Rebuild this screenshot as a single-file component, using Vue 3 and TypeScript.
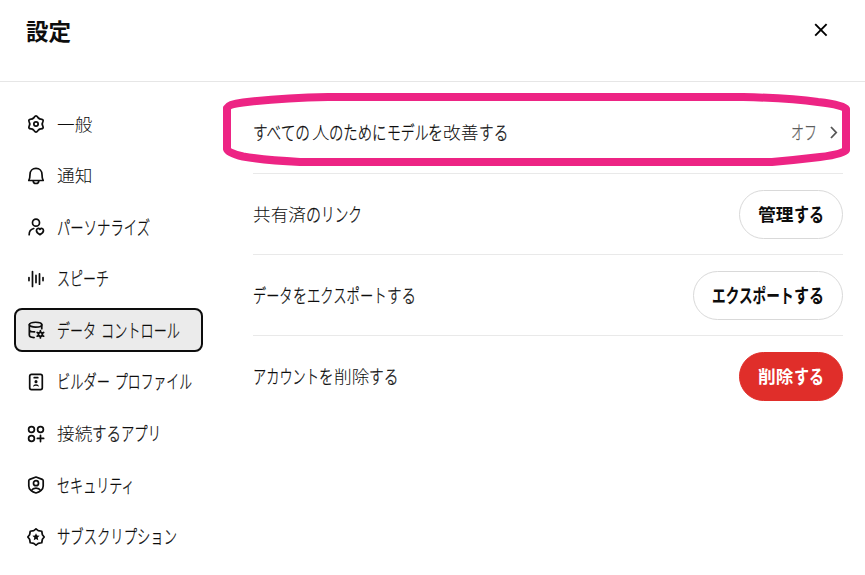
<script setup lang="ts">
import { h, type FunctionalComponent } from 'vue'

// A run is a piece of text and the width it occupies, in pixels.
type Run = [text: string, width: number]

interface NavItem {
  icon: string
  label: Run[]
  active?: boolean
}

interface Row {
  label: Run[]
  value?: Run[]
  action?: Run[]
  danger?: boolean
}

// Full-width glyphs are one em wide, so each run is condensed to its own width.
const Label: FunctionalComponent<{ runs: Run[]; size?: number }> = (props) => {
  const size = props.size ?? 17.6
  return h(
    'span',
    { class: 'label' },
    props.runs.map(([text, width]) => {
      const kana = /[\u3040-\u30ff]/.test(text)
      const scaleX = width / (text.length * size)
      return h('span', { class: ['run', { kana }], style: { width: `${width}px` } }, [
        h('span', { class: 'glyphs', style: { transform: `scale(${scaleX}, ${kana ? 1.08 : 1})` } }, text),
      ])
    }),
  )
}
Label.props = ['runs', 'size']

const nav: NavItem[] = [
  { icon: 'gear', label: [['一般', 35.4]] },
  { icon: 'bell', label: [['通知', 35.4]] },
  { icon: 'person', label: [['パーソナライズ', 93.5]] },
  { icon: 'wave', label: [['スピーチ', 52]] },
  { icon: 'data', label: [['データ', 39], ['\u00a0', 5], ['コントロール', 79]], active: true },
  { icon: 'badge', label: [['ビルダー', 53], ['\u00a0', 4.5], ['プロファイル', 77]] },
  { icon: 'apps', label: [['接続', 35.4], ['する', 29], ['アプリ', 40]] },
  { icon: 'shield', label: [['セキュリティ', 78.5]] },
  { icon: 'star', label: [['サブスクリプション', 120]] },
]

const rows: Row[] = [
  {
    label: [['すべての', 58.5], ['人', 17.5], ['のために', 57.5], ['モデル', 41.5], ['を', 15], ['改善', 35.6], ['する', 29.3]],
    value: [['オフ', 26]],
  },
  { label: [['共有済', 53], ['の', 15], ['リンク', 41]], action: [['管理', 35.4], ['する', 30]] },
  {
    label: [['データ', 39.5], ['を', 14], ['エクスポート', 80], ['する', 29]],
    action: [['エクスポート', 82], ['する', 30]],
  },
  {
    label: [['アカウント', 66], ['を', 14.5], ['削除', 35.4], ['する', 29.5]],
    action: [['削除', 35.4], ['する', 30]],
    danger: true,
  },
]
</script>

<template>
  <div class="settings">
    <header class="header">
      <h1 class="title">設定</h1>
      <button class="close" aria-label="閉じる">
        <svg width="14" height="14" viewBox="0 0 14 14"><path d="M1.2 1.2 12.6 12.6M12.6 1.2 1.2 12.6" stroke="#000" stroke-width="1.9" /></svg>
      </button>
    </header>

    <div class="body">
      <nav class="nav">
        <button v-for="item in nav" :key="item.icon" class="nav-item" :class="{ active: item.active }">
          <svg class="icon" viewBox="0 0 20 20">
            <g v-if="item.icon === 'gear'">
              <path
                v-for="k in 6"
                :key="k"
                :transform="`rotate(${k * 60} 10 10)`"
                d="M6.5 3.94Q7.5 3.5 8 2.5 10-.5 12 2.5 12.500 3.5 13.5 3.94"
              />
              <circle cx="10" cy="10" r="2.4" />
            </g>
            <g v-else-if="item.icon === 'bell'">
              <path d="M2 15Q3.3 12.8 3.3 8.500C3.3 4.2 6.2 1.500 10 1.500S16.7 4.2 16.7 8.500Q16.7 12.8 18 15ZM6.8 15.200C7 19.4 13 19.4 13.2 15.200" />
            </g>
            <g v-else-if="item.icon === 'person'">
              <circle cx="10" cy="5.2" r="3.9" />
              <path d="M2.4 18.500C2.4 15 4.4 12.4 7.5 11.7M14.4 18.5C11.6 17.200 10.5 15.700 10.500 14 10.5 11.4 13.100 10.9 14.4 12.7 15.700 10.9 18.3 11.4 18.3 14 18.3 15.700 17.200 17.200 14.4 18.500Z" />
            </g>
            <g v-else-if="item.icon === 'wave'">
              <path d="M2.2 8.4V11.7M6.1 1.8V18.2M10 6V14M13.9 4.2V15.8M17.8 8.400V11.7" />
            </g>
            <g v-else-if="item.icon === 'data'">
              <ellipse cx="9.5" cy="4.1" rx="6.9" ry="2.7" />
              <path d="M2.6 4.1V15.5C2.6 17 4.6 18.200 7.9 18.400M16.4 4.1V8.6M2.6 9.600C2.6 11.1 5 12 8.4 12.1" />
              <circle cx="14.9" cy="14.8" r="2.2" />
              <path d="M14.9 10.7V12.3M14.9 17.300V18.9M11.300 12.700 12.800 13.600M17 16 18.500 16.900M11.3 16.900 12.8 16M17 13.6 18.5 12.7" />
            </g>
            <g v-else-if="item.icon === 'badge'">
              <rect x="3" y="1.500" width="14" height="17" rx="2" />
              <path d="M8 5.200H12" />
              <circle class="solid" cx="10" cy="9.6" r="1.700" />
              <path class="solid" d="M6.7 15.300C7 11.600 13 11.600 13.3 15.300Q10 13.200 6.7 15.300Z" />
            </g>
            <g v-else-if="item.icon === 'apps'">
              <circle cx="5" cy="5" r="3.2" /><circle cx="15" cy="5" r="3.2" /><circle cx="5" cy="14.900" r="3.2" />
              <path d="M15 11.400V18.400M11.5 14.900H18.500" />
            </g>
            <g v-else-if="item.icon === 'shield'">
              <path d="M10 1.1 16.900 3.7Q18 4.2 18 5.3V11.2C18 14.7 14.5 17.800 10 18.9 5.5 17.800 2 14.7 2 11.2V5.300Q2 4.200 3.1 3.7Z" />
              <circle cx="10" cy="8" r="2.800" />
              <path d="M5 16C7 12.700 13 12.700 15 16" />
            </g>
            <g v-else>
              <path d="M10 .9 12.5 2.9 16.4 3.6 17.1 7.5 19.1 10 17.1 12.5 16.4 16.4 12.5 17.1 10 19.1 7.5 17.1 3.6 16.4 2.9 12.5 .9 10 2.9 7.5 3.6 3.6 7.5 2.9Z" />
              <path class="solid" d="M10 5.8 11.2 8.4 14 8.7 11.9 10.6 12.500 13.500 10 12.1 7.500 13.500 8.1 10.600 6 8.700 8.800 8.400Z" />
            </g>
          </svg>
          <Label :runs="item.label" />
        </button>
      </nav>

      <main class="content">
        <section v-for="(row, i) in rows" :key="i" class="row">
          <Label :runs="row.label" />
          <span v-if="row.value" class="value">
            <Label :runs="row.value" />
            <svg width="8" height="14" viewBox="0 0 8 14"><path d="M1 2 6.200 7.500 1 13" fill="none" stroke="#555" stroke-width="1.8" /></svg>
          </span>
          <button v-if="row.action" class="action" :class="{ danger: row.danger }">
            <Label :runs="row.action" />
          </button>
        </section>
      </main>
    </div>

    <svg class="marker" width="865" height="575" viewBox="0 0 865 575">
      <path d="M227 108Q229 104 243 102.500Q280 98 328 97H743Q790 98 818 102Q844 105 846 109V150Q844 154 820 157Q795 160 772 162H300Q264 160 243 156.500Q228 153 227 149Z" />
    </svg>
  </div>
</template>

<style>
body {
  background: #fff;
}
</style>

<style scoped>
.settings {
  position: relative;
  width: 865px;
  height: 575px;
  overflow: hidden;
  color: #0d0d0d;
  font-family: 'Noto Sans CJK JP', sans-serif;
  font-size: 17.6px;
  font-weight: 300;
}
button {
  font: inherit;
  color: inherit;
  background: none;
  border: 0;
  padding: 0;
}
.header {
  display: flex;
  justify-content: space-between;
  box-sizing: border-box;
  height: 82px;
  padding: 14px 37px 0 26px;
  border-bottom: 1px solid #e6e6e6;
}
.title {
  margin: 0;
  font-size: 22.5px;
  line-height: 32px;
  font-weight: 700;
}
.close {
  display: flex;
  align-items: center;
  height: 32px;
}
.body {
  display: flex;
}
.nav {
  display: flex;
  flex-direction: column;
  gap: 7.6px;
  width: 188.5px;
  padding: 20px 0 0 14px;
}
.nav-item {
  display: flex;
  align-items: center;
  gap: 12px;
  box-sizing: border-box;
  height: 44px;
  padding-left: 11px;
  border: 2px solid transparent;
  border-radius: 8px;
}
.nav-item.active {
  background: #ebebeb;
  border-color: #0d0d0d;
}
.icon {
  width: 18px;
  height: 18px;
  fill: none;
  stroke: #0d0d0d;
  stroke-width: 1.9;
  stroke-linejoin: round;
  stroke-linecap: round;
}
.icon .solid {
  fill: #0d0d0d;
  stroke: none;
}
:deep(.label) {
  display: inline-flex;
  line-height: 26px;
  white-space: nowrap;
}
:deep(.run) {
  display: block;
}
:deep(.kana) {
  -webkit-text-stroke: 0.25px currentColor;
}
:deep(.glyphs) {
  display: inline-block;
  transform-origin: 0 50%;
}
.nav :deep(.label) {
  margin-top: -1px;
}
.content {
  width: 589.5px;
  margin-left: 50.500px;
  padding-top: 10.8px;
}
.row {
  display: flex;
  align-items: center;
  justify-content: space-between;
  box-sizing: border-box;
  height: 81.2px;
  border-bottom: 1px solid #e9e9e9;
}
.row > :deep(.label),
.value {
  padding-bottom: 1px;
}
.row:last-child {
  border-bottom: 0;
}
.value {
  display: flex;
  align-items: center;
  gap: 13px;
  padding-right: 5px;
  color: #5d5d5d;
}
.action {
  box-sizing: border-box;
  height: 49px;
  padding: 0 18px 1px;
  border: 1px solid #d9d9d9;
  border-radius: 25px;
  font-weight: 600;
}
.action :deep(.kana) {
  -webkit-text-stroke: 0;
}
.action.danger {
  color: #fff;
  background: #e02e2a;
  border-color: #e02e2a;
}
.marker {
  position: absolute;
  top: 0;
  left: 0;
  pointer-events: none;
}
.marker path {
  fill: none;
  stroke: #ed2484;
  stroke-width: 8;
  stroke-linejoin: round;
}
</style>
